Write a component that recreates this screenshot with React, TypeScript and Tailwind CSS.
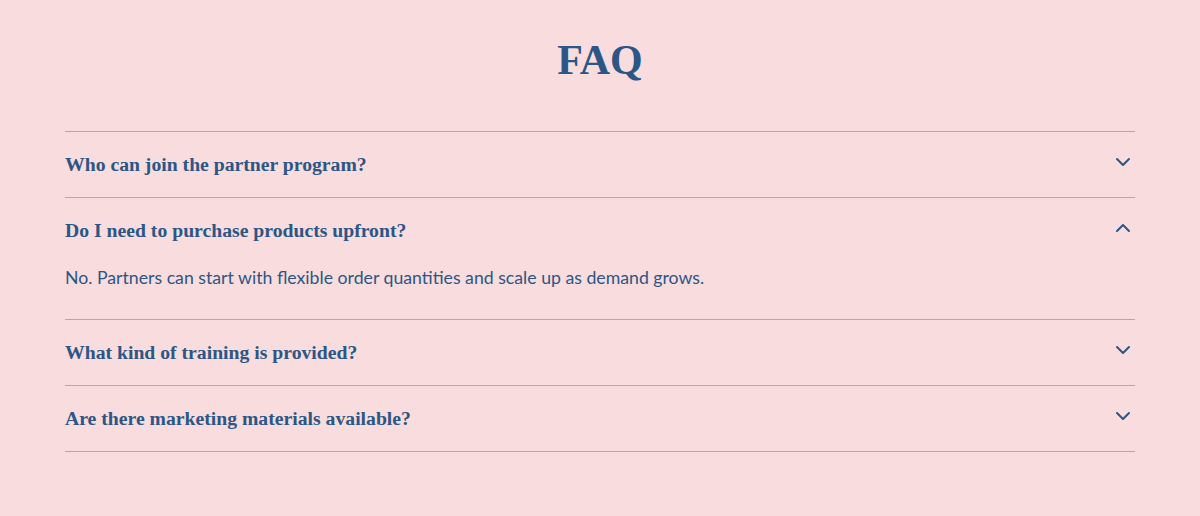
import React, { useState } from 'react';

const faqs = [
  {
    q: 'Who can join the partner program?',
    a: 'Anyone running a boutique, salon or online shop that shares our values is welcome to apply.',
  },
  {
    q: 'Do I need to purchase products upfront?',
    a: 'No. Partners can start with flexible order quantities and scale up as demand grows.',
  },
  {
    q: 'What kind of training is provided?',
    a: 'Every partner gets onboarding sessions, product guides and ongoing support from our team.',
  },
  {
    q: 'Are there marketing materials available?',
    a: 'Yes. We provide photography, social templates and in-store displays for all partners.',
  },
];

function Chevron({ up }: { up: boolean }) {
  return (
    <svg
      width="16"
      height="16"
      viewBox="0 0 16 16"
      fill="none"
      stroke="currentColor"
      strokeWidth="2"
      strokeLinecap="round"
      strokeLinejoin="round"
      className="shrink-0"
    >
      {up ? <path d="M2 11 L8 5 L14 11" /> : <path d="M2 5 L8 11 L14 5" />}
    </svg>
  );
}

export default function App() {
  const [open, setOpen] = useState<number | null>(1);

  return (
    <div className="min-h-[516px] bg-[#f9dcdd] text-[#2c5685]">
      <div className="mx-auto w-[1070px] pt-[34px]">
        <h2 className="text-center text-[42px] font-bold leading-[52px] mb-[45px] font-['Liberation_Serif',serif]">
          FAQ
        </h2>
        <div className="border-t border-[#a3acc3]">
          {faqs.map((f, i) => {
            const isOpen = open === i;
            return (
              <div key={f.q} className="border-b border-[#a3acc3]">
                <button
                  type="button"
                  onClick={() => setOpen(isOpen ? null : i)}
                  className="flex w-full items-center justify-between py-[20px] pr-[4px] text-left"
                >
                  <span className="text-[19.7px] font-bold leading-[25px] font-['Liberation_Serif',serif]">
                    {f.q}
                  </span>
                  <span className="-mt-[6px]">
                    <Chevron up={isOpen} />
                  </span>
                </button>
                {isOpen && (
                  <p className="mt-[2px] pb-[28px] text-[17.7px] leading-[26px] font-['Lato',sans-serif]">
                    {f.a}
                  </p>
                )}
              </div>
            );
          })}
        </div>
      </div>
    </div>
  );
}
